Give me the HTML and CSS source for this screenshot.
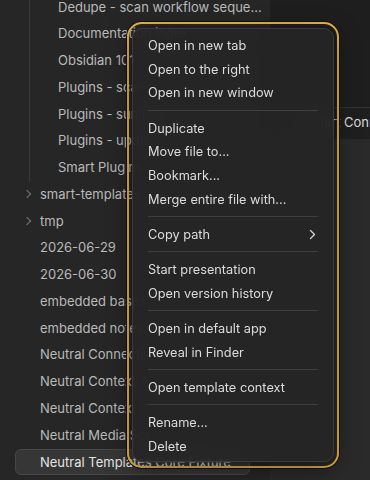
FILE: index.html
```html
<!DOCTYPE html>
<html lang="en">
<head>
  <meta charset="UTF-8">
  <title>File explorer menu</title>
  <link rel="stylesheet" href="styles.css">
</head>
<body>

<div class="app">
  <aside class="sidebar">
    <div class="tree">
      <div class="children">
        <div class="row">Dedupe - scan workflow sequence</div>
        <div class="row">Documentation index</div>
        <div class="row">Obsidian 101</div>
        <div class="row">Plugins - scan</div>
        <div class="row">Plugins - summary</div>
        <div class="row">Plugins - updates</div>
        <div class="row">Smart Plugins</div>
      </div>
      <div class="row folder"><span class="chev"></span>smart-templates</div>
      <div class="row folder"><span class="chev"></span>tmp</div>
      <div class="row file">2026-06-29</div>
      <div class="row file">2026-06-30</div>
      <div class="row file">embedded bases</div>
      <div class="row file">embedded notes</div>
      <div class="row file">Neutral Connections</div>
      <div class="row file">Neutral Context A</div>
      <div class="row file">Neutral Context B</div>
      <div class="row file">Neutral Media Set</div>
      <div class="row file selected">Neutral Templates Core Fixture</div>
    </div>
  </aside>

  <main class="pane">
    <div class="pane-top"></div>
    <div class="tabbar"><span class="tab">Smart Connections</span></div>
    <div class="pane-body"></div>
  </main>
</div>

<!-- context menu -->
<div class="menu-ring">
  <div class="menu">
    <div class="item">Open in new tab</div>
    <div class="item">Open to the right</div>
    <div class="item">Open in new window</div>
    <div class="sep"></div>
    <div class="item">Duplicate</div>
    <div class="item">Move file to...</div>
    <div class="item">Bookmark...</div>
    <div class="item">Merge entire file with...</div>
    <div class="sep"></div>
    <div class="item">Copy path
      <svg class="sub" width="7" height="11" viewBox="0 0 7 11"><path d="M1.5 1.5 L5.5 5.5 L1.5 9.5" fill="none" stroke="currentColor" stroke-width="1.4" stroke-linecap="round" stroke-linejoin="round"/></svg>
    </div>
    <div class="sep"></div>
    <div class="item">Start presentation</div>
    <div class="item">Open version history</div>
    <div class="sep"></div>
    <div class="item">Open in default app</div>
    <div class="item">Reveal in Finder</div>
    <div class="sep"></div>
    <div class="item">Open template context</div>
    <div class="sep"></div>
    <div class="item">Rename...</div>
    <div class="item">Delete</div>
  </div>
</div>

</body>
</html>
```

FILE: styles.css
```css
* {
  box-sizing: border-box;
}

body {
  margin: 0;
  width: 370px;
  height: 480px;
  overflow: hidden;
  background: #1e1e1e;
  font-family: Inter, "Noto Sans", sans-serif;
  font-size: 13px;
  -webkit-font-smoothing: antialiased;
}

.app {
  display: flex;
  height: 480px;
}

/* file tree */
.sidebar {
  width: 270px;
  flex-shrink: 0;
  background: #262626;
  overflow: hidden;
}

.tree {
  margin-top: -6.5px;
}

.children {
  margin-left: 29px;
  border-left: 1px solid #3a3a3a;
  padding-left: 28px;
}

.row {
  height: 26.75px;
  line-height: 26.75px;
  color: #bababa;
  white-space: nowrap;
  overflow: hidden;
  text-overflow: ellipsis;
  padding-right: 2px;
}

.row.file {
  padding-left: 40px;
}

.row.folder {
  display: flex;
  align-items: center;
  padding-left: 22px;
}

.chev {
  width: 13px;
  height: 26px;
  margin-right: 5px;
  flex-shrink: 0;
  position: relative;
}

.chev::before {
  content: "";
  position: absolute;
  left: 2px;
  top: 10px;
  width: 5px;
  height: 5px;
  border-right: 1.3px solid #767676;
  border-top: 1.3px solid #767676;
  transform: rotate(45deg);
}

.row.selected {
  margin-left: 15px;
  margin-right: 20px;
  padding-left: 24px;
  height: 26px;
  line-height: 24px;
  margin-top: 0.4px;
  background: #363636;
  border: 1px solid #474747;
  border-radius: 6px;
  color: #e4e4e4;
}

/* right pane */
.pane {
  flex: 1;
  display: flex;
  flex-direction: column;
}

.pane-top {
  height: 107px;
  background: #1e1e1e;
}

.tabbar {
  height: 32px;
  background: #1f1f1f;
  border-top: 1px solid #333;
  padding-left: 34px;
  line-height: 28px;
  color: #dcdcdc;
  white-space: nowrap;
  overflow: hidden;
}

.pane-body {
  flex: 1;
  background: #2a2a2a;
}

/* context menu */
.menu-ring {
  position: absolute;
  left: 127px;
  top: 21.5px;
  padding: 4px 3px;
  border: 2px solid #efb83c;
  border-radius: 15px;
  box-shadow: 0 0 0 1px #111;
}

.menu {
  width: 202px;
  padding: 5px 4px 3px;
  background: rgba(37, 37, 37, 0.92);
  backdrop-filter: blur(14px);
  border: 1px solid #3b3b3b;
  border-radius: 10px;
  box-shadow: 0 6px 24px rgba(0,0,0,0.5);
  font-size: 12.75px;
}

.item {
  height: 23.8px;
  display: flex;
  align-items: center;
  justify-content: space-between;
  padding: 0 13px 0 11px;
  color: #dcdcdc;
  white-space: nowrap;
}

.item .sub {
  color: #cfcfcf;
}

.sep {
  height: 1px;
  margin: 5px 11px 5.3px;
  background: #3e3e3e;
}
```
